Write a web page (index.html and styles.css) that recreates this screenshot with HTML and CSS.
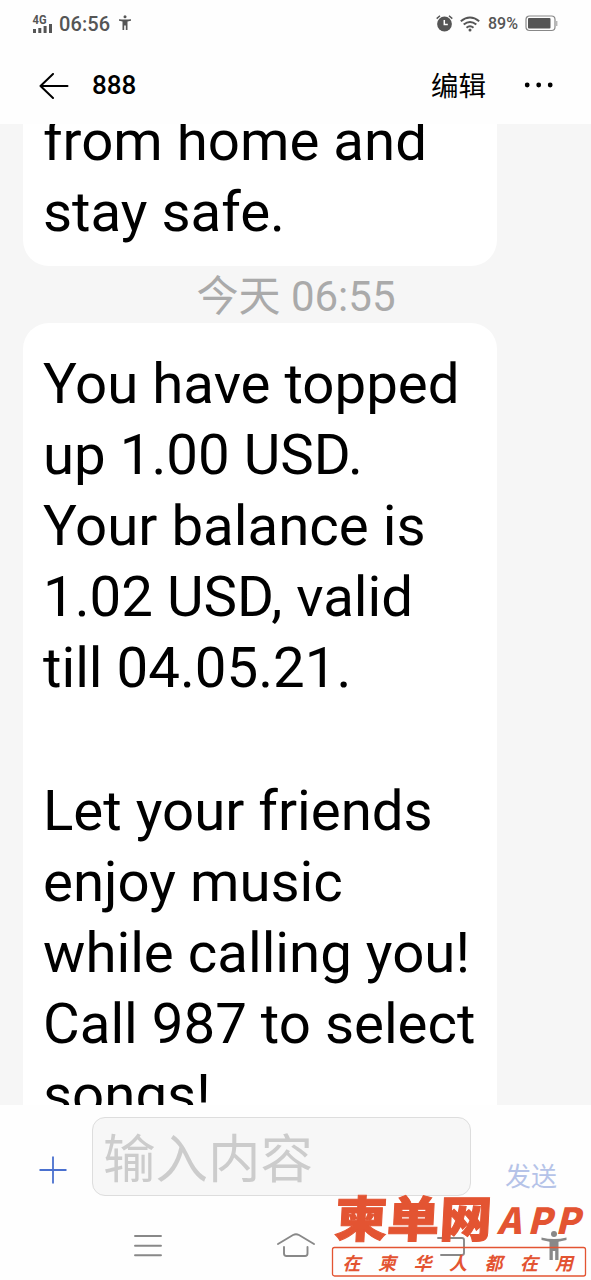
FILE: index.html
```html
<!DOCTYPE html>
<html lang="zh-CN">
<head>
<meta charset="utf-8">
<title>888</title>
<link rel="stylesheet" href="styles.css">
</head>
<body>
<div class="phone">
  <header class="top">
    <div class="status">
      <svg class="signal" width="20" height="20" viewBox="0 0 20 20">
        <text class="net" x="-.5" y="9.500" textLength="14" lengthAdjust="spacingAndGlyphs">4G</text>
        <path d="M0 15h3v4h-3zM5.300 14h3v5h-3zM10.600 12h3v7h-3zM16 10h3v9h-3z"/>
      </svg>
      <span class="clock">06:56</span>
      <svg class="person" width="12" height="16" viewBox="0 0 12 16">
        <circle cx="6" cy="1.800" r="1.500"/>
        <path d="M0 4.200q6 .6 12 0v1.500l-3.500 .7v8.600h-1.700v-4.500h-1.600v4.500h-1.700v-8.600l-3.500-.7z"/>
      </svg>
      <div class="status-right">
        <svg class="alarm" width="17" height="17" viewBox="0 0 17 17">
          <circle cx="8.500" cy="9" r="7.400"/>
          <path class="ears" d="M.7 3.600L4 .8M16.300 3.600L13 .8"/>
          <path class="hands" d="M8.300 5v4.600h3.500"/>
        </svg>
        <svg class="wifi" width="20" height="16" viewBox="0 0 20 16">
          <path d="M.8 5.200Q10-2.200 19.200 5.200M3.700 8.600Q10 3.300 16.300 8.600M6.500 11.700Q10 8.800 13.500 11.700"/>
          <circle cx="10" cy="14" r="1.500"/>
        </svg>
        <span class="percent">89%</span>
        <svg class="battery" width="34" height="17" viewBox="0 0 34 17">
          <rect class="case" x="1" y="1" width="29" height="14.500" rx="3.500"/>
          <rect x="3" y="3" width="22.500" height="10.500" rx="1"/>
          <path d="M31.300 6h1v5h-1z" opacity=".6"/>
        </svg>
      </div>
    </div>
    <div class="bar">
      <svg class="back" width="30" height="26" viewBox="0 0 30 26"><path d="M14 1L1.500 13L14 25M1.500 13H28.500"/></svg>
      <h1 class="title">888</h1>
      <span class="edit">编辑</span>
      <svg class="more" width="30" height="6" viewBox="0 0 30 6"><circle cx="3.200" cy="3" r="2.400"/><circle cx="14.700" cy="3" r="2.400"/><circle cx="26.200" cy="3" r="2.400"/></svg>
    </div>
  </header>

  <main class="thread">
    <div class="bubble first">from home and<br>stay safe.</div>
    <div class="stamp">今天 06:55</div>
    <div class="bubble">You have topped<br>up 1.00 USD.<br>Your balance is<br>1.02 USD, valid<br>till 04.05.21.<br><br>Let your friends<br>enjoy music<br>while calling you!<br>Call 987 to select<br>songs!</div>
  </main>

  <footer class="compose">
    <svg class="plus" width="28" height="28" viewBox="0 0 28 28"><path d="M14 .5v27M.5 14h27"/></svg>
    <div class="field">输入内容</div>
    <span class="send">发送</span>
  </footer>

  <nav class="nav">
    <svg class="menu" width="28" height="22" viewBox="0 0 28 22"><path d="M1 1h26M1 10.700h26M1 20.300h26"/></svg>
    <svg class="home" width="40" height="26" viewBox="0 0 40 26"><path d="M2 12L17 3Q20 1.500 23 3L38 12M8 15v6.500q0 2.500 2.500 2.500h18.500q2.500 0 2.500-2.500v-6.500"/></svg>
    <svg class="return" width="30" height="22" viewBox="0 0 30 22"><path d="M1 2h24q2 0 2 2v13q0 2-2 2h-21"/></svg>
    <svg class="access" width="26" height="29" viewBox="0 0 26 29">
      <circle cx="13" cy="3" r="3"/>
      <path d="M.5 6.500q12.500 3 25 0v2.500l-8 1.700v18.300h-3.300v-9h-2.400v9h-3.300v-18.300l-8-1.700z"/>
    </svg>
  </nav>

  <svg class="brand" width="262" height="90" viewBox="0 0 262 90">
    <g class="logo" transform="translate(0 46.500) skewX(-3)">
      <text x="4" y="0" textLength="157" lengthAdjust="spacingAndGlyphs">柬单网</text>
    </g>
    <text class="app" y="44" x="167 197 225">APP</text>
    <rect x="2.500" y="57.500" width="253" height="28.500" rx="2"/>
    <text class="tag" y="80" x="12.500 48 83.500 119 154.500 190 225">在柬华人都在用</text>
  </svg>
</div>
</body>
</html>
```
FILE: styles.css
```css
* { box-sizing: border-box; }
body { margin: 0; background: #fff; }
svg { display: block; flex: none; }
.phone {
  position: relative;
  display: flex;
  flex-direction: column;
  width: 591px;
  height: 1280px;
  overflow: hidden;
  background: #fefefe;
  font-family: Roboto, "Noto Sans CJK SC", sans-serif;
  color: #000;
}
.top { height: 124px; flex: none; }
.status {
  display: flex;
  align-items: center;
  height: 47px;
  padding: 0 34px 0 33px;
  color: #555;
  fill: #555;
}
.signal { overflow: visible; }
.net { font-size: 12px; font-weight: 700; }
.clock { margin-left: 6px; font-size: 20px; font-weight: 500; line-height: 24px; letter-spacing: .1px; }
.person { margin-left: 9px; margin-bottom: 1px; }
.status-right { display: flex; align-items: center; margin-left: auto; }
.ears { fill: none; stroke: #555; stroke-width: 1.500px; }
.hands { fill: none; stroke: #fff; stroke-width: 1.500px; }
.wifi { margin-left: 7px; }
.wifi path { fill: none; stroke: #555; stroke-width: 2px; }
.percent { margin-left: 8px; font-size: 16px; font-weight: 500; width: 31px; }
.battery { margin-left: 6px; margin-right: -2px; }
.case { fill: none; stroke: #888; stroke-width: 1.200px; }
.bar { display: flex; align-items: center; height: 77px; padding: 0 37px 0 39px; }
.back path { fill: none; stroke: #000; stroke-width: 2px; stroke-linecap: round; stroke-linejoin: round; }
.title { margin: -2px 0 0 23px; font-size: 26px; font-weight: 500; line-height: 30px; }
.edit { margin-left: auto; margin-top: 3px; margin-right: 2px; font-size: 27.500px; line-height: 40px; }
.more { margin-left: 36px; margin-top: -1px; }
.thread {
  display: flex;
  flex-direction: column;
  flex: none;
  height: 981px;
  padding-left: 23px;
  overflow: hidden;
  background: #f6f6f6;
}
.bubble {
  flex: none;
  width: 474px;
  padding: 26px 0 25px 20px;
  border-radius: 26px;
  background: #fff;
  font-size: 56.400px;
  line-height: 71.100px;
  white-space: nowrap;
}
.bubble.first { height: 171px; margin-top: -29px; padding-top: 11px; }
.stamp {
  height: 57px;
  width: 546px;
  padding-top: 1px;
  text-align: center;
  font-size: 42px;
  line-height: 60px;
  color: #aaa;
}
.compose { display: flex; flex: none; align-items: flex-start; height: 105px; padding: 12px 34px 0 39px; }
.plus { margin-top: 39px; }
.plus path { stroke: #4a70cf; stroke-width: 1.800px; }
.field {
  width: 379px;
  height: 79px;
  margin-left: 25px;
  padding: 3px 0 0 10px;
  border: 1px solid #ddd;
  border-radius: 13px;
  background: #f7f7f7;
  color: #ccc;
  font-size: 52.500px;
  line-height: 78px;
}
.send { margin-left: auto; margin-top: 41px; font-size: 26px; line-height: 38px; color: #b5c3e8; }
.nav { display: flex; align-items: flex-start; height: 70px; padding: 20px 0 0 134px; }
.nav path { fill: none; stroke: #888; stroke-width: 1.900px; stroke-linecap: round; }
.menu { margin-top: 5px; }
.home { margin-left: 114px; margin-top: 2px; }
.return { margin-left: 121px; margin-top: 6px; }
.access { margin-left: 74px; margin-top: 1px; fill: #888; }
.nav .access path { fill: #888; stroke: none; }
.brand { position: absolute; left: 330px; top: 1190px; fill: #e35432; font-family: "Noto Sans CJK SC", sans-serif; }
.logo { font-size: 49px; font-weight: 900; stroke: #e35432; stroke-width: 1px; }
.app { font-size: 36px; font-weight: 900; font-style: italic; }
.brand rect { fill: none; stroke: #e35432; stroke-width: 1.300px; }
.tag { font-size: 18px; font-weight: 700; font-style: italic; }
```
